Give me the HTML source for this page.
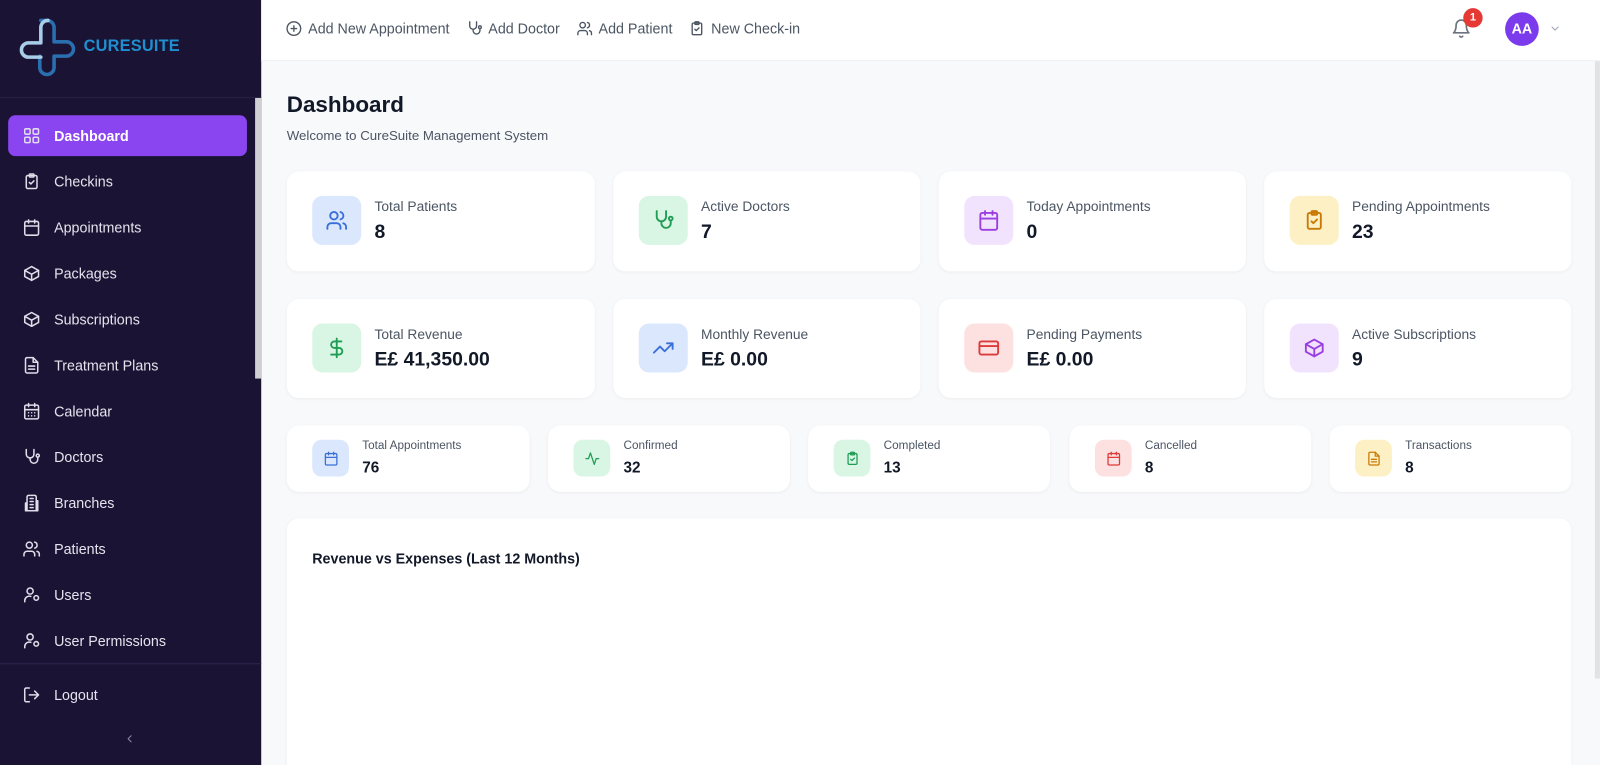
<!DOCTYPE html>
<html><head><meta charset="utf-8"><style>
*{box-sizing:border-box;margin:0;padding:0}
html,body{width:1600px;height:765px;overflow:hidden}
body{font-family:"Liberation Sans",sans-serif;background:#f8f9fb;position:relative}
#w{position:absolute;left:0;top:0;width:1568px;height:750px;transform:scale(1.0204);transform-origin:0 0;overflow:hidden}
svg{fill:none;stroke:currentColor;stroke-width:2;stroke-linecap:round;stroke-linejoin:round}
.sb{position:absolute;left:0;top:0;width:256px;height:750px;background:#1b1333}
.logo{position:absolute;left:14px;top:16px;display:flex;align-items:center}
.logo span{color:#1e8fd0;font-weight:bold;font-size:16px;margin-left:4px;letter-spacing:.2px}
.line1{position:absolute;left:0;top:95px;width:256px;height:1px;background:#2a2145}
.scr{position:absolute;left:250px;top:96px;width:6px;height:275px;background:#d0d0d4}
.nav{position:absolute;left:8px;width:234px;height:40px;display:flex;align-items:center;padding-left:14px;color:#e6e2ee;font-size:14px;border-radius:7px}
.nav svg{width:18px;height:18px;margin-right:13px;color:#e0dcea}
.nav.act{background:#8a45f0;font-weight:bold;color:#fff}
.line2{position:absolute;left:0;top:650px;width:256px;height:1px;background:#2e2550}
.top{position:absolute;left:256px;top:0;width:1312px;height:60px;background:#fff;border-bottom:1px solid #eceef2}
.tl{position:absolute;left:24px;top:20px;display:flex;color:#4b5563;font-size:14px}
.tl div{display:flex;align-items:center;margin-right:16px}
.tl svg{width:16px;height:16px;margin-right:6px}
.rsc{position:absolute;left:1563px;top:60px;width:5px;height:605px;background:#e2e3e6}
h1{position:absolute;left:281px;top:90px;font-size:22px;color:#111827}
.sub{position:absolute;left:281px;top:125px;font-size:13px;color:#4b5563}
.card{position:absolute;background:#fff;border-radius:12px;box-shadow:0 1px 3px rgba(0,0,0,.05)}
.ib{position:absolute;left:25px;width:48px;height:48px;border-radius:10px;display:flex;align-items:center;justify-content:center}
.ib svg{width:22px;height:22px}
.lb{position:absolute;left:86px;top:27px;font-size:13.5px;color:#4b5563}
.vl{position:absolute;left:86px;top:49px;font-size:19px;font-weight:bold;color:#111827}
.sib{position:absolute;left:25px;top:14px;width:36px;height:36px;border-radius:9px;display:flex;align-items:center;justify-content:center}
.sib svg{width:15px;height:15px}
.slb{position:absolute;left:74px;top:14px;font-size:11.5px;color:#4b5563}
.svl{position:absolute;left:74px;top:33px;font-size:15px;font-weight:bold;color:#111827}
</style></head><body><div id="w">
<div class="sb">
<div class="logo"><svg width="64" height="60" viewBox="0 0 64 60" style="stroke-width:3.5"><path d="M26 4 h6 a7 7 0 0 1 7 7 v14 h12 a7 7 0 0 1 0 14 h-12 v11 a7 7 0 0 1 -14 0 v-11" stroke="#2a6fb0"/><path d="M26 40 h-12 a7 7 0 0 1 0 -14 h12 v-15 a7 7 0 0 1 7 -7" stroke="#a8cde8"/></svg><span>CURESUITE</span></div>
<div class="line1"></div><div class="scr"></div>
<div class="nav act" style="top:113px"><svg viewBox="0 0 24 24"><rect x="3" y="3" width="7" height="7" rx="1.5"/><rect x="14" y="3" width="7" height="7" rx="1.5"/><rect x="3" y="14" width="7" height="7" rx="1.5"/><rect x="14" y="14" width="7" height="7" rx="1.5"/></svg>Dashboard</div>
<div class="nav" style="top:158px"><svg viewBox="0 0 24 24"><rect x="5" y="4" width="14" height="17" rx="2"/><rect x="9" y="2" width="6" height="4" rx="1"/><path d="m9 13 2 2 4-4"/></svg>Checkins</div>
<div class="nav" style="top:203px"><svg viewBox="0 0 24 24"><rect x="3" y="4" width="18" height="18" rx="2"/><path d="M16 2v4M8 2v4M3 10h18"/></svg>Appointments</div>
<div class="nav" style="top:248px"><svg viewBox="0 0 24 24"><path d="M21 8 12 3 3 8v8l9 5 9-5z"/><path d="M3 8l9 5 9-5M12 13v8"/></svg>Packages</div>
<div class="nav" style="top:293px"><svg viewBox="0 0 24 24"><path d="M21 8 12 3 3 8v8l9 5 9-5z"/><path d="M3 8l9 5 9-5M12 13v8"/></svg>Subscriptions</div>
<div class="nav" style="top:338px"><svg viewBox="0 0 24 24"><path d="M14 2H6a2 2 0 0 0-2 2v16a2 2 0 0 0 2 2h12a2 2 0 0 0 2-2V8z"/><path d="M14 2v6h6M8 13h8M8 17h8"/></svg>Treatment Plans</div>
<div class="nav" style="top:383px"><svg viewBox="0 0 24 24"><rect x="3" y="4" width="18" height="18" rx="2"/><path d="M16 2v4M8 2v4M3 10h18M8 14h.01M12 14h.01M16 14h.01M8 18h.01M12 18h.01M16 18h.01"/></svg>Calendar</div>
<div class="nav" style="top:428px"><svg viewBox="0 0 24 24"><path d="M5 2v6a5 5 0 0 0 10 0V2"/><path d="M10 13v2a5 5 0 0 0 10 0v-3"/><circle cx="20" cy="10" r="2"/></svg>Doctors</div>
<div class="nav" style="top:473px"><svg viewBox="0 0 24 24"><path d="M6 22V4a2 2 0 0 1 2-2h8a2 2 0 0 1 2 2v18zM6 12H4v10h2M18 9h2v13h-2M10 6h4M10 10h4M10 14h4M10 18h4"/></svg>Branches</div>
<div class="nav" style="top:518px"><svg viewBox="0 0 24 24"><circle cx="9" cy="7" r="4"/><path d="M2 21v-2a4 4 0 0 1 4-4h6a4 4 0 0 1 4 4v2M16 3.1a4 4 0 0 1 0 7.8M22 21v-2a4 4 0 0 0-3-3.9"/></svg>Patients</div>
<div class="nav" style="top:563px"><svg viewBox="0 0 24 24"><circle cx="10" cy="7" r="4"/><path d="M3 21v-2a6 6 0 0 1 8-5"/><circle cx="18" cy="16" r="3"/></svg>Users</div>
<div class="nav" style="top:608px"><svg viewBox="0 0 24 24"><circle cx="10" cy="7" r="4"/><path d="M3 21v-2a6 6 0 0 1 8-5"/><circle cx="18" cy="16" r="3"/></svg>User Permissions</div>
<div class="line2"></div>
<div class="nav" style="top:661px"><svg viewBox="0 0 24 24"><path d="M9 21H5a2 2 0 0 1-2-2V5a2 2 0 0 1 2-2h4M16 17l5-5-5-5M21 12H9"/></svg>Logout</div>
<svg viewBox="0 0 24 24" style="position:absolute;left:121px;top:718px;width:12px;height:12px;color:#8d86a3"><path d="m15 18-6-6 6-6"/></svg>
</div>
<div class="top">
<div class="tl">
<div><svg viewBox="0 0 24 24"><circle cx="12" cy="12" r="10"/><path d="M8 12h8M12 8v8"/></svg>Add New Appointment</div>
<div><svg viewBox="0 0 24 24"><path d="M5 2v6a5 5 0 0 0 10 0V2"/><path d="M10 13v2a5 5 0 0 0 10 0v-3"/><circle cx="20" cy="10" r="2"/></svg>Add Doctor</div>
<div><svg viewBox="0 0 24 24"><circle cx="9" cy="7" r="4"/><path d="M2 21v-2a4 4 0 0 1 4-4h6a4 4 0 0 1 4 4v2M16 3.1a4 4 0 0 1 0 7.8M22 21v-2a4 4 0 0 0-3-3.9"/></svg>Add Patient</div>
<div><svg viewBox="0 0 24 24"><rect x="5" y="4" width="14" height="17" rx="2"/><rect x="9" y="2" width="6" height="4" rx="1"/><path d="m9 13 2 2 4-4"/></svg>New Check-in</div>
</div>
<svg viewBox="0 0 24 24" style="position:absolute;left:1166px;top:18px;width:20px;height:20px;color:#6b7280"><path d="M6 8a6 6 0 0 1 12 0c0 7 3 9 3 9H3s3-2 3-9M10.3 21a1.94 1.94 0 0 0 3.4 0"/></svg>
<div style="position:absolute;left:1178px;top:8px;width:19px;height:19px;border-radius:50%;background:#e53935;color:#fff;font-size:11px;font-weight:bold;text-align:center;line-height:19px">1</div>
<div style="position:absolute;left:1219px;top:12px;width:33px;height:33px;border-radius:50%;background:#7c3aed;color:#fff;font-size:14px;font-weight:bold;text-align:center;line-height:33px">AA</div>
<svg viewBox="0 0 24 24" style="position:absolute;left:1262px;top:22px;width:12px;height:12px;color:#9ca3af"><path d="m6 9 6 6 6-6"/></svg>
</div>
<div class="rsc"></div>
<h1>Dashboard</h1>
<div class="sub">Welcome to CureSuite Management System</div>

<div class="card" style="left:281px;top:168px;width:302px;height:98px"><div class="ib" style="top:24px;background:#dbe7fd;color:#3b6fd8"><svg viewBox="0 0 24 24"><circle cx="9" cy="7" r="4"/><path d="M2 21v-2a4 4 0 0 1 4-4h6a4 4 0 0 1 4 4v2M16 3.1a4 4 0 0 1 0 7.8M22 21v-2a4 4 0 0 0-3-3.9"/></svg></div><div class="lb">Total Patients</div><div class="vl">8</div></div>
<div class="card" style="left:601px;top:168px;width:301px;height:98px"><div class="ib" style="top:24px;background:#d8f6e3;color:#1f9d55"><svg viewBox="0 0 24 24"><path d="M5 2v6a5 5 0 0 0 10 0V2"/><path d="M10 13v2a5 5 0 0 0 10 0v-3"/><circle cx="20" cy="10" r="2"/></svg></div><div class="lb">Active Doctors</div><div class="vl">7</div></div>
<div class="card" style="left:920px;top:168px;width:301px;height:98px"><div class="ib" style="top:24px;background:#f1e3fd;color:#9b3fe0"><svg viewBox="0 0 24 24"><rect x="3" y="4" width="18" height="18" rx="2"/><path d="M16 2v4M8 2v4M3 10h18"/></svg></div><div class="lb">Today Appointments</div><div class="vl">0</div></div>
<div class="card" style="left:1239px;top:168px;width:301px;height:98px"><div class="ib" style="top:24px;background:#fcf0c4;color:#c97a06"><svg viewBox="0 0 24 24"><rect x="5" y="4" width="14" height="17" rx="2"/><rect x="9" y="2" width="6" height="4" rx="1"/><path d="m9 13 2 2 4-4"/></svg></div><div class="lb">Pending Appointments</div><div class="vl">23</div></div>

<div class="card" style="left:281px;top:293px;width:302px;height:97px"><div class="ib" style="top:24px;background:#d8f6e3;color:#1f9d55"><svg viewBox="0 0 24 24"><path d="M12 2v20M17 5H9.5a3.5 3.5 0 0 0 0 7h5a3.5 3.5 0 0 1 0 7H6"/></svg></div><div class="lb">Total Revenue</div><div class="vl">E£ 41,350.00</div></div>
<div class="card" style="left:601px;top:293px;width:301px;height:97px"><div class="ib" style="top:24px;background:#dbe7fd;color:#3b6fd8"><svg viewBox="0 0 24 24"><path d="m22 7-8.5 8.5-5-5L2 17M16 7h6v6"/></svg></div><div class="lb">Monthly Revenue</div><div class="vl">E£ 0.00</div></div>
<div class="card" style="left:920px;top:293px;width:301px;height:97px"><div class="ib" style="top:24px;background:#fde0e0;color:#dc3b3b"><svg viewBox="0 0 24 24"><rect x="2" y="5" width="20" height="14" rx="2"/><path d="M2 10h20"/></svg></div><div class="lb">Pending Payments</div><div class="vl">E£ 0.00</div></div>
<div class="card" style="left:1239px;top:293px;width:301px;height:97px"><div class="ib" style="top:24px;background:#f1e3fd;color:#9b3fe0"><svg viewBox="0 0 24 24"><path d="M21 8 12 3 3 8v8l9 5 9-5z"/><path d="M3 8l9 5 9-5M12 13v8"/></svg></div><div class="lb">Active Subscriptions</div><div class="vl">9</div></div>

<div class="card" style="left:281px;top:417px;width:238px;height:65px"><div class="sib" style="background:#dbe7fd;color:#3b6fd8"><svg viewBox="0 0 24 24"><rect x="3" y="4" width="18" height="18" rx="2"/><path d="M16 2v4M8 2v4M3 10h18"/></svg></div><div class="slb">Total Appointments</div><div class="svl">76</div></div>
<div class="card" style="left:537px;top:417px;width:237px;height:65px"><div class="sib" style="background:#d8f6e3;color:#1f9d55"><svg viewBox="0 0 24 24"><path d="M22 12h-4l-3 9L9 3l-3 9H2"/></svg></div><div class="slb">Confirmed</div><div class="svl">32</div></div>
<div class="card" style="left:792px;top:417px;width:237px;height:65px"><div class="sib" style="background:#d8f6e3;color:#1f9d55"><svg viewBox="0 0 24 24"><rect x="5" y="4" width="14" height="17" rx="2"/><rect x="9" y="2" width="6" height="4" rx="1"/><path d="m9 13 2 2 4-4"/></svg></div><div class="slb">Completed</div><div class="svl">13</div></div>
<div class="card" style="left:1048px;top:417px;width:237px;height:65px"><div class="sib" style="background:#fde0e0;color:#dc3b3b"><svg viewBox="0 0 24 24"><rect x="3" y="4" width="18" height="18" rx="2"/><path d="M16 2v4M8 2v4M3 10h18"/></svg></div><div class="slb">Cancelled</div><div class="svl">8</div></div>
<div class="card" style="left:1303px;top:417px;width:237px;height:65px"><div class="sib" style="background:#fcf0c4;color:#c97a06"><svg viewBox="0 0 24 24"><path d="M14 2H6a2 2 0 0 0-2 2v16a2 2 0 0 0 2 2h12a2 2 0 0 0 2-2V8z"/><path d="M14 2v6h6M8 13h8M8 17h8"/></svg></div><div class="slb">Transactions</div><div class="svl">8</div></div>

<div class="card" style="left:281px;top:508px;width:1259px;height:242px;border-bottom-left-radius:0;border-bottom-right-radius:0"><div style="position:absolute;left:25px;top:31px;font-size:14px;font-weight:bold;color:#111827">Revenue vs Expenses (Last 12 Months)</div></div>
</div></body></html>
